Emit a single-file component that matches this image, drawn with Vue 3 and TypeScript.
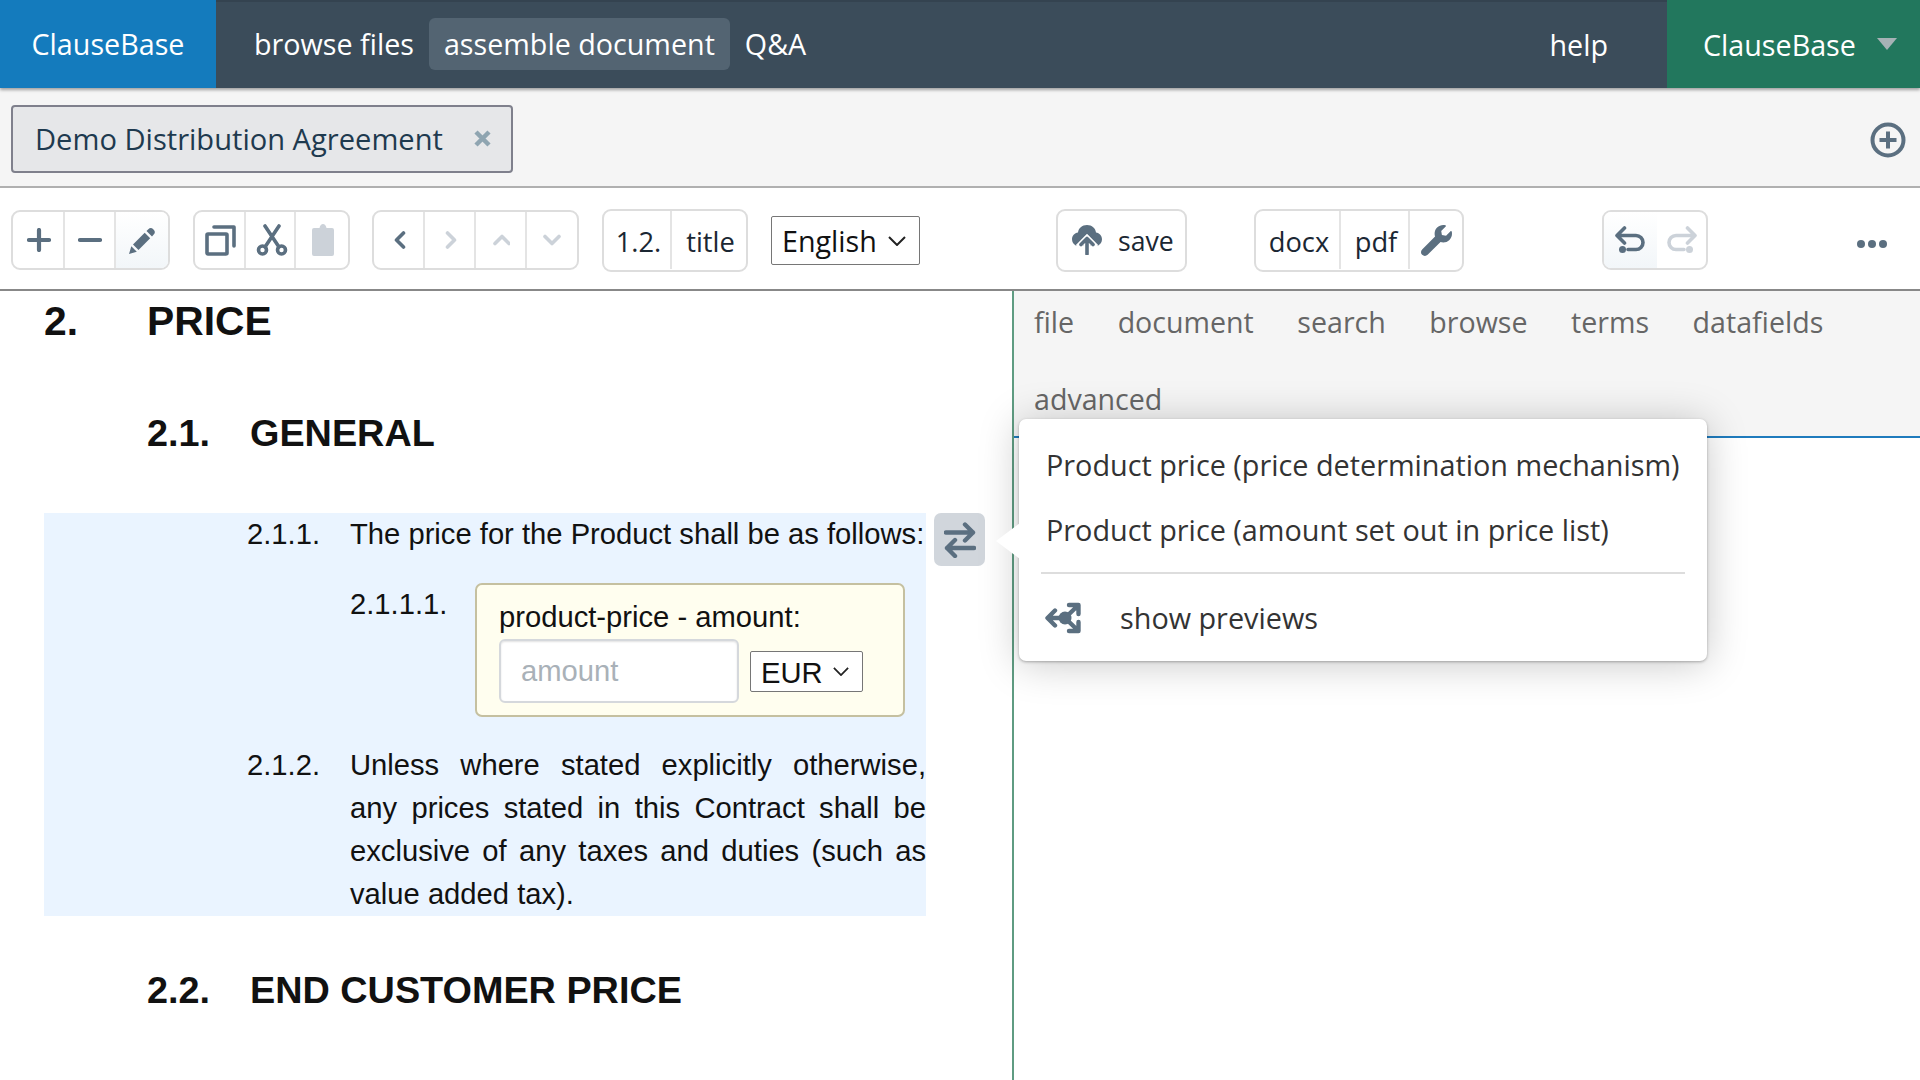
<script setup lang="ts">
const panelTabs: string[] = ["file", "document", "search", "browse", "terms", "datafields", "advanced"];
const arrows: { d: string; off: boolean }[] = [
  { d: "M13.500 2 6.500 9l7 7", off: false },
  { d: "M6.500 2l7 7-7 7", off: true },
  { d: "M3 12.500l7-7 7 7", off: true },
  { d: "M2 5.500l7 7 7-7", off: true },
];
</script>

<template>
  <div class="app">
    <header class="top">
      <a class="top__brand">ClauseBase</a>
      <nav class="top__nav">
        <a class="top__link">browse files</a>
        <a class="top__link top__link--on">assemble document</a>
        <a class="top__link">Q&amp;A</a>
      </nav>
      <a class="top__help">help</a>
      <div class="top__user">
        <span>ClauseBase</span>
        <i class="top__caret"></i>
      </div>
    </header>

    <div class="tabs">
      <div class="tab">
        <span>Demo Distribution Agreement</span>
        <svg class="tab__x" viewBox="0 0 19 17" width="19" height="17">
          <path d="M3 2l13 13M16 2 3 15" />
        </svg>
      </div>
      <svg class="tabs__add" viewBox="0 0 36 36" width="36" height="36">
        <circle cx="18" cy="18" r="15.500" />
        <path d="M18 9.500v17M9.500 18h17" />
      </svg>
    </div>

    <div class="bar">
      <div class="grp">
        <button class="cell cell--a1">
          <svg viewBox="0 0 24 24" width="24" height="24" class="ic nudge"><path d="M12 2v20M2 12h20" /></svg>
        </button>
        <button class="cell cell--a">
          <svg viewBox="0 0 24 24" width="24" height="24" class="ic"><path d="M2 12h20" /></svg>
        </button>
        <button class="cell cell--c cell--soft">
          <svg viewBox="0 0 27 27" width="27" height="27" class="fill">
            <path d="M0 27l2.300-7.800 5.500 5.500zM4 17.500 15.700 5.800l5.500 5.500L9.500 23zM17.500 4l1.800-1.800c1.500-1.500 3.400-1.500 4.700-.2l.9.900c1.300 1.300 1.300 3.200-.2 4.700L23 9.500z" />
          </svg>
        </button>
      </div>

      <div class="grp grp--m23">
        <button class="cell cell--a">
          <svg viewBox="0 0 31 32" width="31" height="32" class="ic ic--thin nudge">
            <rect x="2" y="10" width="20" height="20" rx="1" />
            <path d="M9 3h20v19" />
          </svg>
        </button>
        <button class="cell cell--d">
          <svg viewBox="0 0 32 32" width="32" height="32" class="ic ic--thin nudge2">
            <circle cx="6.500" cy="26" r="4" />
            <circle cx="25.500" cy="26" r="4" />
            <path d="M9 23 23 2M23 23 9 2" />
          </svg>
        </button>
        <button class="cell cell--e">
          <svg viewBox="0 0 22 32" width="22" height="32" class="fill fill--off nudge">
            <path d="M2 4h5.500C8 1.500 9.400 0 11 0s3 1.500 3.500 4H20a2 2 0 0 1 2 2v24a2 2 0 0 1-2 2H2a2 2 0 0 1-2-2V6a2 2 0 0 1 2-2z" />
          </svg>
        </button>
      </div>

      <div class="grp grp--m22">
        <button v-for="(a, i) in arrows" :key="i" class="cell cell--n">
          <svg viewBox="0 0 18 18" width="18" height="18" class="ic ic--thin" :class="{ 'ic--off': a.off }">
            <path :d="a.d" />
          </svg>
        </button>
      </div>

      <div class="grp grp--txt grp--m23">
        <button class="cell cell--txt1">1.2.</button>
        <button class="cell cell--txt2">title</button>
      </div>

      <select class="lang">
        <option>English</option>
      </select>

      <button class="grp grp--txt save">
        <svg viewBox="0 0 30 30" width="30" height="30" class="save__ic">
          <path class="save__cloud" d="M15 0c5 0 8.500 3.400 9 7.500 3.500.5 6 3.300 6 6.800 0 2.700-1.500 5-3.700 6.200H3.700C1.500 19.300 0 17 0 14.300c0-3.500 2.500-6.300 6-6.800C6.500 3.400 10 0 15 0z" />
          <path class="save__gap" d="M15 32V14M6 22l9-9 9 9" />
          <path class="save__arrow" d="M15 29V14M9 19.500l6-6 6 6" />
        </svg>
        <span>save</span>
      </button>

      <div class="grp grp--txt grp--exp">
        <button class="cell cell--docx">docx</button>
        <button class="cell cell--pdf">pdf</button>
        <button class="cell cell--tool">
          <svg viewBox="0 0 512 512" width="31" height="31" class="fill">
            <path d="M507.730 109.100c-2.240-9.030-13.540-12.090-20.120-5.510l-74.360 74.360-67.880-11.310-11.310-67.880 74.360-74.360c6.620-6.620 3.430-17.900-5.660-20.160-47.380-11.740-99.550.91-136.580 37.930-39.640 39.640-50.550 97.100-34.050 147.200L18.740 402.760c-24.990 24.990-24.990 65.510 0 90.500 24.990 24.990 65.510 24.990 90.500 0l213.210-213.210c50.120 16.710 107.470 5.680 147.370-34.220 37.070-37.070 49.700-89.320 37.910-136.730z" />
          </svg>
        </button>
      </div>

      <div class="grp grp--undo">
        <button class="cell cell--u cell--flat">
          <svg viewBox="0 0 31 28" width="31" height="28" class="ic ic--thin">
            <path d="M9.500 2 2 9.500l7.500 7.500M2 9.500h19a7 7 0 0 1 0 14h-8" />
            <circle class="dot" cx="7.500" cy="23.500" r="3.500" />
          </svg>
        </button>
        <button class="cell cell--r cell--flat cell--plain">
          <svg viewBox="0 0 31 28" width="31" height="28" class="ic ic--thin ic--off flip">
            <path d="M9.500 2 2 9.500l7.500 7.500M2 9.500h19a7 7 0 0 1 0 14h-8" />
            <circle class="dot" cx="7.500" cy="23.500" r="3.500" />
          </svg>
        </button>
      </div>

      <div class="dots"><i></i><i></i><i></i></div>
    </div>

    <main class="body">
      <article class="doc">
        <h1 class="doc__h1"><span>2.</span>PRICE</h1>
        <h2 class="doc__h2"><span>2.1.</span>GENERAL</h2>

        <section class="sel">
          <div class="row">
            <span class="row__no">2.1.1.</span>
            <p class="row__txt">The price for the Product shall be as follows:</p>
          </div>
          <div class="sub">
            <span class="sub__no">2.1.1.1.</span>
            <div class="field">
              <label class="field__lbl">product-price - amount:</label>
              <div class="field__ctl">
                <input class="field__in" placeholder="amount" />
                <select class="field__sel"><option>EUR</option></select>
              </div>
            </div>
          </div>
          <div class="row row--just">
            <span class="row__no">2.1.2.</span>
            <p class="row__txt">Unless where stated explicitly otherwise, any prices stated in this Contract shall be exclusive of any taxes and duties (such as value added tax).</p>
          </div>
          <button class="swap">
            <svg viewBox="0 0 32 36" width="32" height="36" class="ic ic--swap">
              <path d="M2 10.500h27M21 2.500l8 8-8 8M30 26H3M11 18l-8 8 8 8" />
            </svg>
          </button>
        </section>

        <h2 class="doc__h2 doc__h2--last"><span>2.2.</span>END CUSTOMER PRICE</h2>
      </article>

      <aside class="side">
        <nav class="side__tabs">
          <a v-for="t in panelTabs" :key="t" class="side__tab">{{ t }}</a>
        </nav>
      </aside>

      <div class="pop">
        <i class="pop__tip"></i>
        <a class="pop__item">Product price (price determination mechanism)</a>
        <a class="pop__item">Product price (amount set out in price list)</a>
        <hr class="pop__hr" />
        <a class="pop__prev">
          <svg viewBox="0 0 36 32" width="36" height="32" class="ic ic--prev">
            <path d="M20 16H3M10 8.500 2.500 16l7.500 7.500M20 16 33 3.500M24 3h9.500v9M20 16l13 12.500M24 29h9.500v-9" />
            <circle class="hub" cx="20" cy="16" r="6.500" />
          </svg>
          <span>show previews</span>
        </a>
      </div>
    </main>
  </div>
</template>

<style scoped>
.app {
  width: 1920px;
  height: 1080px;
  overflow: hidden;
  display: flex;
  flex-direction: column;
  font-family: "Open Sans", "Noto Sans", sans-serif;
  color: #1b2733;
  background: #fff;
}
a {
  cursor: pointer;
}
button {
  font: inherit;
  color: inherit;
  background: none;
  border: 0;
  padding: 0;
  cursor: pointer;
}

/* top bar */
.top {
  height: 88px;
  flex: none;
  display: flex;
  align-items: stretch;
  background: #3b4c5a;
  border-top: 2px solid #344350;
  box-sizing: border-box;
  color: #fff;
  font-size: 28.7px;
  line-height: 86px;
  box-shadow: 0 2px 3px rgba(0, 0, 0, 0.35);
  position: relative;
  z-index: 2;
}
.top__brand {
  width: 216px;
  margin-top: -2px;
  padding-top: 1px;
  box-sizing: border-box;
  background: #147bbd;
  text-align: center;
}
.top__nav {
  display: flex;
  align-items: center;
  margin: -2px 0 0 23px;
}
.top__link {
  line-height: 52px;
  padding: 0 15px;
  border-radius: 6px;
}
.top__link--on {
  background: #536472;
}
.top__help {
  margin-left: auto;
  margin-right: 59px;
}
.top__user {
  width: 253px;
  margin-top: -2px;
  padding: 1px 0 0 36px;
  box-sizing: border-box;
  background: #22775d;
  display: flex;
  align-items: center;
}
.top__caret {
  margin: -1px 0 0 21px;
  border: 10px solid transparent;
  border-top: 12px solid #a6b2b5;
  border-bottom: 0;
}

/* document tabs */
.tabs {
  height: 100px;
  flex: none;
  box-sizing: border-box;
  display: flex;
  align-items: flex-start;
  justify-content: space-between;
  padding: 17px 14px 0 11px;
  background: #f5f5f5;
  border-bottom: 2px solid #b0b0b0;
}
.tab {
  width: 502px;
  height: 68px;
  box-sizing: border-box;
  display: flex;
  align-items: center;
  padding-left: 22px;
  background: #e6e7e9;
  border: 2px solid #7f808c;
  border-radius: 4px;
  font-size: 29.1px;
  color: #1e3a4f;
}
.tab__x {
  margin: -2px 19px 0 auto;
  fill: none;
  stroke: #8fa5b1;
  stroke-width: 4.5;
}
.tabs__add {
  margin-top: 17px;
  fill: none;
  stroke: #5b6f80;
  stroke-width: 4;
}

/* toolbar */
.bar {
  height: 103px;
  flex: none;
  box-sizing: border-box;
  display: flex;
  align-items: flex-start;
  padding: 21px 0 0 11px;
  border-bottom: 2px solid #888;
  font-size: 27.3px;
}
.grp {
  height: 60px;
  margin-top: 1px;
  box-sizing: border-box;
  display: flex;
  border: 2px solid #ddd;
  border-radius: 9px;
  overflow: hidden;
}
.grp--m23 {
  margin-left: 23px;
}
.grp--m22 {
  margin-left: 22px;
}
.grp--txt {
  height: 63px;
  margin-top: 0;
  padding-bottom: 1px;
}
.grp--exp {
  margin-left: 67px;
  color: #1b2733;
}
.grp--undo {
  margin-left: 138px;
}
.cell {
  height: 100%;
  display: flex;
  align-items: center;
  justify-content: center;
  box-sizing: border-box;
  border-right: 2px solid #e4e4e4;
  flex: none;
}
.cell:last-child {
  border-right: 0;
}
.cell--txt1,
.cell--txt2,
.cell--docx,
.cell--pdf {
  padding: 2px 0 0 3px;
}
.cell--soft,
.cell--flat {
  background: linear-gradient(180deg, #fff, #f2f6f9);
}
.cell--flat {
  border-right: 0;
}
.cell--plain {
  background: none;
}
.cell--a1 {
  width: 52px;
}
.cell--a {
  width: 51px;
}
.cell--c {
  width: 52px;
}
.cell--d {
  width: 50px;
}
.cell--e {
  width: 52px;
}
.cell--n {
  width: 51px;
}
.cell--n:last-child {
  width: 50px;
}
.cell--txt1 {
  width: 68px;
}
.cell--txt2 {
  width: 74px;
}
.cell--docx {
  width: 85px;
}
.cell--pdf {
  width: 69px;
}
.cell--tool {
  width: 52px;
}
.cell--u {
  width: 53px;
}
.cell--r {
  width: 49px;
}
.nudge {
  margin-left: 1px;
}
.nudge2 {
  margin-left: 3px;
}
.ic {
  fill: none;
  stroke: #5b6f80;
  stroke-width: 4.2;
  stroke-linecap: round;
  stroke-linejoin: round;
}
.ic--thin {
  stroke-width: 3.6;
}
.ic--off {
  stroke: #ccd2d9;
}
.ic--off .dot {
  fill: #ccd2d9;
}
.ic--swap,
.ic--prev {
  stroke-width: 4.4;
}
.dot,
.hub {
  fill: #5b6f80;
  stroke: none;
}
.flip {
  transform: scaleX(-1);
}
.fill {
  fill: #5b6f80;
}
.fill--off {
  fill: #ccd2d9;
}
.lang,
.field__sel {
  appearance: none;
  color: #111;
  border: 1px solid #767676;
  border-radius: 2px;
  background-color: #fff;
  background-repeat: no-repeat;
  background-image: url("data:image/svg+xml,%3Csvg xmlns='http://www.w3.org/2000/svg' viewBox='0 0 18 10'%3E%3Cpath d='M1 1l8 8 8-8' fill='none' stroke='%23222' stroke-width='2'/%3E%3C/svg%3E");
}
.lang {
  width: 149px;
  height: 49px;
  margin: 7px 0 0 23px;
  padding-left: 10px;
  font: inherit;
  font-size: 28.7px;
  background-size: 18px 10px;
  background-position: right 13px center;
}
.save {
  width: 131px;
  margin-left: 136px;
  align-items: center;
  padding: 0 0 1px 14px;
  gap: 16px;
}
.save span {
  padding-top: 2px;
  font-size: 26.6px;
}
.save__cloud {
  fill: #5b6f80;
}
.save__gap {
  fill: none;
  stroke: #fff;
  stroke-width: 6;
}
.save__arrow {
  fill: none;
  stroke: #5b6f80;
  stroke-width: 3.6;
  stroke-linecap: round;
  stroke-linejoin: round;
}
.dots {
  margin: 31px 0 0 149px;
  display: flex;
  gap: 3px;
}
.dots i {
  width: 8px;
  height: 8px;
  border-radius: 50%;
  background: #5b6f80;
}

/* content */
.body {
  flex: 1;
  display: flex;
  min-height: 0;
  position: relative;
}
.doc {
  width: 1012px;
  flex: none;
  box-sizing: border-box;
  padding: 7px 86px 0 44px;
  font-family: "Liberation Sans", Arial, sans-serif;
  font-size: 29.2px;
  line-height: 43px;
  color: #111;
}
.doc__h1,
.doc__h2 {
  margin: 0;
  font-weight: 700;
  line-height: 46px;
  color: #111;
}
.doc__h1 {
  font-size: 40.8px;
}
.doc__h1 span {
  display: inline-block;
  width: 103px;
}
.doc__h2 {
  font-size: 37.8px;
  padding-left: 103px;
  margin: 66px 0 57px;
}
.doc__h2 span {
  display: inline-block;
  width: 103px;
}
.doc__h2--last {
  margin: 51px 0 0;
}
.sel {
  position: relative;
  background: #eaf4ff;
  padding-left: 203px;
}
.row {
  display: flex;
}
.row__no {
  width: 103px;
  flex: none;
}
.row__txt {
  margin: 0;
  white-space: nowrap;
}
.row--just {
  margin-top: 27px;
}
.row--just .row__txt {
  white-space: normal;
  text-align: justify;
}
.sub {
  display: flex;
  margin: 26px 0 0 103px;
}
.sub__no {
  width: 125px;
  flex: none;
  padding-top: 1px;
}
.field {
  width: 430px;
  height: 134px;
  margin-top: 1px;
  box-sizing: border-box;
  padding: 14px 0 0 22px;
  background: #fffeef;
  border: 2px solid #c5c0a0;
  border-radius: 7px;
}
.field__lbl {
  display: block;
  line-height: 36px;
  margin-bottom: 4px;
}
.field__ctl {
  display: flex;
  align-items: center;
  gap: 11px;
}
.field__in {
  width: 240px;
  height: 64px;
  box-sizing: border-box;
  padding: 0 20px;
  font: inherit;
  background: #fff;
  border: 2px solid #d5d8dc;
  border-radius: 6px;
  box-shadow: inset 0 1px 2px rgba(0, 0, 0, 0.12);
  outline: 0;
}
.field__in::placeholder {
  color: #a9b1b8;
}
.field__sel {
  width: 113px;
  height: 41px;
  padding: 0 0 2px 10px;
  font: inherit;
  background-size: 16px 9px;
  background-position: right 13px center;
}
.swap {
  position: absolute;
  top: 0;
  left: 890px;
  width: 51px;
  height: 53px;
  display: flex;
  align-items: center;
  justify-content: center;
  background: #d1d6dc;
  border-radius: 7px;
}

/* right panel */
.side {
  flex: 1;
  border-left: 2px solid #5f9c82;
}
.side__tabs {
  display: flex;
  flex-wrap: wrap;
  box-sizing: border-box;
  height: 147px;
  padding-left: 20px;
  column-gap: 43.5px;
  row-gap: 16px;
  align-content: flex-start;
  background: #f5f5f5;
  border-bottom: 2px solid #1f7bbd;
  font-size: 28.6px;
  line-height: 61px;
  color: #666;
}

/* popover */
.pop {
  position: absolute;
  left: 1019px;
  top: 128px;
  width: 688px;
  height: 242px;
  box-sizing: border-box;
  padding-top: 13px;
  background: #fff;
  border-radius: 7px;
  box-shadow: 0 3px 40px rgba(0, 0, 0, 0.22), 0 1px 3px rgba(0, 0, 0, 0.3);
  font-size: 28.8px;
  color: #333;
}
.pop__tip {
  position: absolute;
  left: -23px;
  top: 104px;
  width: 24px;
  height: 36px;
  background: #fff;
  clip-path: polygon(100% 0, 0 50%, 100% 100%);
}
.pop__item {
  display: block;
  padding-left: 27px;
  line-height: 65px;
}
.pop__hr {
  margin: 10px 22px 0;
  border: 0;
  height: 2px;
  background: #ddd;
}
.pop__prev {
  display: flex;
  align-items: center;
  padding: 16px 0 0 26px;
  gap: 39px;
  line-height: 56px;
}
</style>

<style>
html,
body {
  margin: 0;
  overflow: hidden;
}
</style>
